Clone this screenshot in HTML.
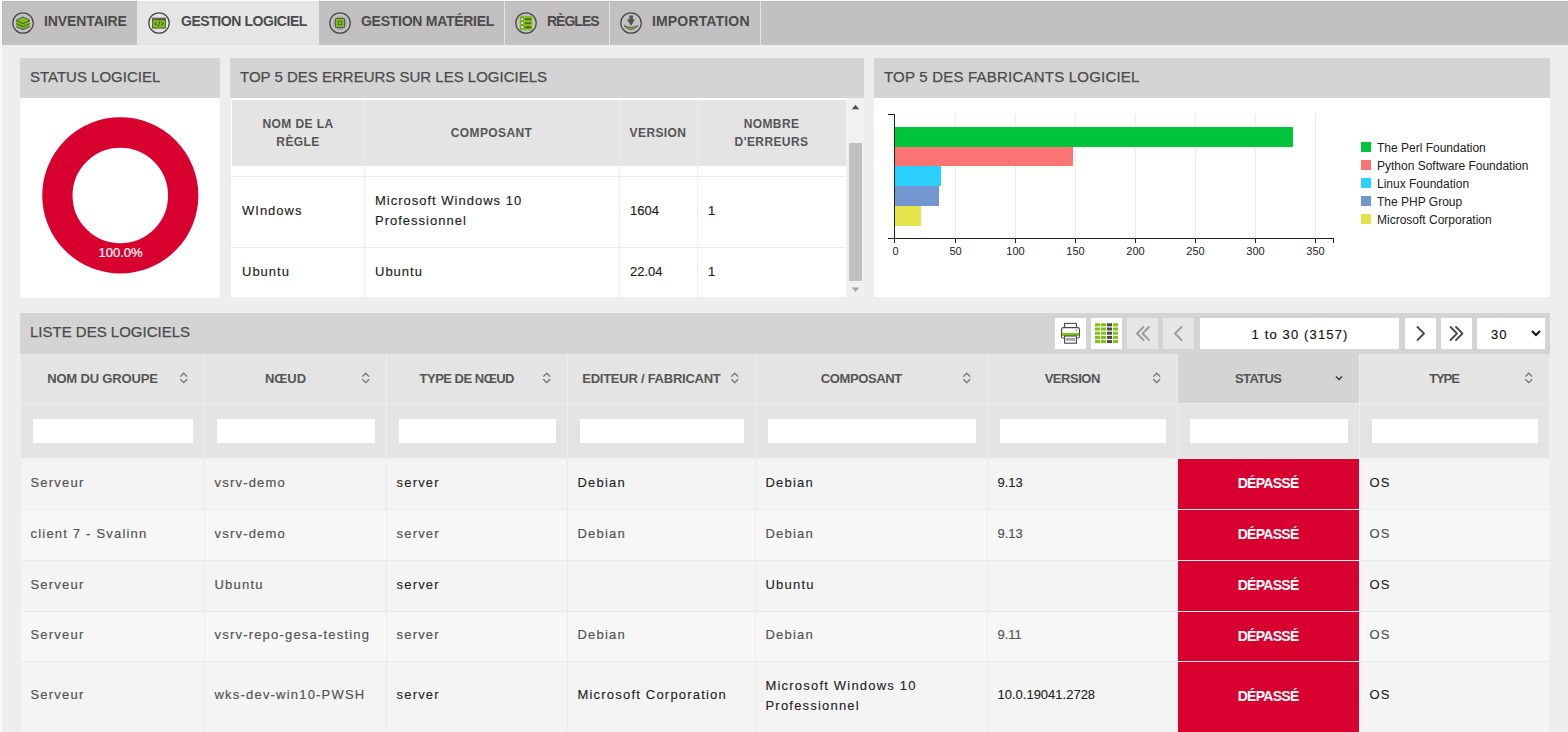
<!DOCTYPE html><html><head><meta charset="utf-8"><style>
*{margin:0;padding:0;box-sizing:border-box}
html,body{width:1568px;height:732px;overflow:hidden}
body{background:#eeeeee;font-family:"Liberation Sans",sans-serif;position:relative;color:#4a4a4a}
.a{position:absolute}
.t{position:absolute;white-space:nowrap}
#tabbar{left:2px;top:1px;width:1566px;height:44px;background:#c2c0c0}
.tab{top:1px;height:44px}
.tab.on{background:#e5e5e5}
.sep{top:1px;width:1px;height:44px;background:#e4e3e3}
.tl{font-weight:bold;font-size:14px;color:#4b4b4b;top:14px;line-height:14px}
.ph{background:#d4d4d4}
.ptitle{font-size:15px;color:#4b4b4b;line-height:15px;-webkit-text-stroke:0.25px #4b4b4b}
.white{background:#fff}
.th2{font-weight:bold;font-size:12px;color:#555;line-height:18px;text-align:center;letter-spacing:0.4px}
.td2{font-size:13px;color:#1e1e1e;line-height:20px;letter-spacing:1px;-webkit-text-stroke:0.15px #1e1e1e}
.num{letter-spacing:0!important}
.hdr{background:#e4e4e4}
.vl{width:1px;background:#ebebeb}
.hl{height:1px;background:#ebebeb}
.th{font-weight:bold;font-size:13px;color:#555;line-height:14px;top:372px;text-align:center}
.inp{background:#fff;top:419px;height:24px}
.td{font-size:13px;color:#555;line-height:20px;letter-spacing:1.2px;-webkit-text-stroke:0.2px #555}
.dk{color:#222;-webkit-text-stroke:0.1px #222}
.red{background:#d7002e}
.dep{font-weight:bold;font-size:14px;color:#fff;line-height:14px;text-align:center;letter-spacing:-0.7px;text-indent:-0.7px}
.lg{font-size:12px;color:#222;line-height:14px}
.tick{font-size:11px;color:#222;line-height:12px;text-align:center;width:40px}
.btn{top:318px;width:31px;height:31px;background:#fff}
.btn.dis{background:#e6e6e6}
</style></head><body>
<div class="a" style="left:0;top:0;width:2px;height:732px;background:#f9f9f9"></div>
<div class="a" style="left:1px;top:0;width:1px;height:732px;background:#fdfdfd"></div>
<div class="a" style="left:0;top:0;width:1568px;height:1px;background:#fcfcfc"></div>
<div class="a" id="tabbar"></div>
<div class="a" style="left:2px;top:1px;width:1566px;height:1px;background:#bab8b8"></div>
<div class="a" style="left:2px;top:1px;width:1px;height:44px;background:#bab8b8"></div>
<div class="a tab on" style="left:137px;width:182px"></div>
<div class="a sep" style="left:504px"></div>
<div class="a sep" style="left:609px"></div>
<div class="a sep" style="left:760px"></div>
<svg class="a" style="left:11px;top:10.8px" width="24" height="24" viewBox="0 0 24 24"><circle cx="12" cy="12" r="10.2" fill="none" stroke="#4a4a4a" stroke-width="1.25"/><path d="M12 6 L18.9 9.3 V15.5 L12 18.8 L5.2 15.5 V9.3Z" fill="#7cc20e"/><path d="M5.2 9.3 L12 6 L18.9 9.3" fill="none" stroke="#4a4a4a" stroke-width="0.9"/><path d="M5.2 9.6 L12 12.6 L18.9 9.6 M5.2 12.6 L12 15.6 L18.9 12.6 M5.2 15.6 L12 18.6 L18.9 15.6" fill="none" stroke="#4a4a4a" stroke-width="0.95"/></svg>
<div class="t tl" style="left:44px;letter-spacing:-0.1px">INVENTAIRE</div>
<svg class="a" style="left:147.1px;top:10.8px" width="24" height="24" viewBox="0 0 24 24"><circle cx="12" cy="12" r="10.2" fill="none" stroke="#4a4a4a" stroke-width="1.25"/><rect x="5.6" y="7.1" width="12.7" height="10" fill="#7cc20e" stroke="#4a4a4a" stroke-width="0.9"/><path d="M5.6 8.5 H18.3" stroke="#4a4a4a" stroke-width="1.3"/><path d="M6.7 8.4 H8.2 M9.5 8.4 H10.5" stroke="#7cc20e" stroke-width="0.6"/><path d="M9.9 11.2 L7.6 12.8 L9.9 14.4 M14.1 11.2 L16.4 12.8 L14.1 14.4 M12.8 10.4 L11.2 15.4" fill="none" stroke="#4a4a4a" stroke-width="1"/></svg>
<div class="t tl" style="left:181px;letter-spacing:-0.44px">GESTION LOGICIEL</div>
<svg class="a" style="left:328px;top:10.899999999999999px" width="24" height="24" viewBox="0 0 24 24"><circle cx="12" cy="12" r="10.2" fill="none" stroke="#4a4a4a" stroke-width="1.25"/><path d="M9.8 5.6 V7.4 M12 5.6 V7.4 M14.2 5.6 V7.4 M9.8 16.6 V18.4 M12 16.6 V18.4 M14.2 16.6 V18.4 M5.6 9.8 H7.4 M5.6 12 H7.4 M5.6 14.2 H7.4 M16.6 9.8 H18.4 M16.6 12 H18.4 M16.6 14.2 H18.4" stroke="#6a6a6a" stroke-width="0.9"/><rect x="7.6" y="7.6" width="8.8" height="8.8" fill="#7cc20e" stroke="#4a4a4a" stroke-width="0.8"/><rect x="10.2" y="10.2" width="3.6" height="3.6" fill="#7cc20e" stroke="#4a4a4a" stroke-width="0.8"/></svg>
<div class="t tl" style="left:361px;letter-spacing:-0.27px">GESTION MATÉRIEL</div>
<svg class="a" style="left:514px;top:10.600000000000001px" width="24" height="24" viewBox="0 0 24 24"><circle cx="12" cy="12" r="10.2" fill="none" stroke="#4a4a4a" stroke-width="1.25"/><rect x="5.9" y="5.1" width="12.3" height="14" fill="#7cc20e"/><rect x="7" y="7.1" width="2.4" height="2.4" fill="#fff" stroke="#4a4a4a" stroke-width="0.4"/><rect x="7" y="10.9" width="2.4" height="2.4" fill="#fff" stroke="#4a4a4a" stroke-width="0.4"/><rect x="7" y="15" width="2.4" height="2.4" fill="#fff" stroke="#4a4a4a" stroke-width="0.4"/><path d="M11.1 8.3 H17.1 M11.1 12.1 H17.1 M11.1 16.2 H17.1" stroke="#4a4a4a" stroke-width="1.4"/></svg>
<div class="t tl" style="left:547px;letter-spacing:-1.0px">RÈGLES</div>
<svg class="a" style="left:619.1px;top:10.899999999999999px" width="24" height="24" viewBox="0 0 24 24"><circle cx="12" cy="12" r="10.2" fill="none" stroke="#4a4a4a" stroke-width="1.25"/><path d="M5 14.6 Q12 22.6 19 14.6 Q12 18.2 5 14.6Z" fill="#7cc20e" stroke="#4a4a4a" stroke-width="0.8" stroke-linejoin="round"/><path d="M10.3 4.5 H13.9 V8.6 H16 L12.1 14.8 L7.9 8.6 H10.3Z" fill="#555"/></svg>
<div class="t tl" style="left:652px;letter-spacing:0.16px">IMPORTATION</div>
<div class="a ph" style="left:20px;top:58px;width:200px;height:40px"></div>
<div class="t ptitle" style="left:30px;top:69px;letter-spacing:0px">STATUS LOGICIEL</div>
<div class="a white" style="left:20px;top:98px;width:200px;height:199px"></div>
<div class="a white" style="left:20px;top:297px;width:200px;height:1px"></div>
<div class="a ph" style="left:230px;top:58px;width:634px;height:40px"></div>
<div class="t ptitle" style="left:240px;top:69px;letter-spacing:0px">TOP 5 DES ERREURS SUR LES LOGICIELS</div>
<div class="a white" style="left:230px;top:98px;width:634px;height:199px"></div>
<div class="a ph" style="left:874px;top:58px;width:676px;height:40px"></div>
<div class="t ptitle" style="left:884px;top:69px;letter-spacing:0.21px">TOP 5 DES FABRICANTS LOGICIEL</div>
<div class="a white" style="left:874px;top:98px;width:676px;height:199px"></div>
<svg class="a" style="left:20px;top:98px" width="200" height="199"><circle cx="100.3" cy="97.4" r="62.9" fill="none" stroke="#d7002e" stroke-width="30.3"/></svg>
<div class="t" style="left:80.5px;top:245.5px;width:80px;text-align:center;font-size:13px;line-height:14px;color:#fff;-webkit-text-stroke:0.2px #fff">100.0%</div>
<div class="a hdr" style="left:232px;top:100px;width:614px;height:66px"></div>
<div class="a vl" style="left:364px;top:100px;height:197px;background:#eeeeee"></div>
<div class="a vl" style="left:619px;top:100px;height:197px;background:#eeeeee"></div>
<div class="a vl" style="left:697px;top:100px;height:197px;background:#eeeeee"></div>
<div class="a hl" style="left:231px;top:176px;width:615px"></div>
<div class="a hl" style="left:231px;top:247px;width:615px"></div>
<div class="a" style="left:230px;top:98px;width:1px;height:199px;background:#efefef"></div>
<div class="t th2" style="left:232px;top:115px;width:132px">NOM DE LA<br>RÈGLE</div>
<div class="t th2" style="left:364px;top:124px;width:255px">COMPOSANT</div>
<div class="t th2" style="left:619px;top:124px;width:78px">VERSION</div>
<div class="t th2" style="left:697px;top:115px;width:149px">NOMBRE<br>D'ERREURS</div>
<div class="t td2" style="left:242px;top:201px">WIndows</div>
<div class="t td2" style="left:375px;top:191px">Microsoft Windows 10<br>Professionnel</div>
<div class="t td2 num" style="left:630px;top:201px">1604</div>
<div class="t td2" style="left:708px;top:201px">1</div>
<div class="t td2" style="left:242px;top:262px">Ubuntu</div>
<div class="t td2" style="left:375px;top:262px">Ubuntu</div>
<div class="t td2 num" style="left:630px;top:262px">22.04</div>
<div class="t td2" style="left:708px;top:262px">1</div>
<div class="a" style="left:846px;top:98px;width:18px;height:199px;background:#f1f1f1"></div>
<div class="a" style="left:849px;top:143px;width:13px;height:138px;background:#c1c1c1"></div>
<svg class="a" style="left:846px;top:100px" width="17" height="14"><path d="M5.8 9.3 L9.5 4.8 L13.2 9.3Z" fill="#505050"/></svg>
<svg class="a" style="left:846px;top:283px" width="17" height="14"><path d="M5.8 4.6 L9.5 9 L13.2 4.6Z" fill="#a3a3a3"/></svg>
<div class="a" style="left:955.0px;top:114px;width:1px;height:124px;background:#ebebeb"></div>
<div class="a" style="left:1015.0px;top:114px;width:1px;height:124px;background:#ebebeb"></div>
<div class="a" style="left:1075.0px;top:114px;width:1px;height:124px;background:#ebebeb"></div>
<div class="a" style="left:1135.0px;top:114px;width:1px;height:124px;background:#ebebeb"></div>
<div class="a" style="left:1195.0px;top:114px;width:1px;height:124px;background:#ebebeb"></div>
<div class="a" style="left:1255.0px;top:114px;width:1px;height:124px;background:#ebebeb"></div>
<div class="a" style="left:1315.0px;top:114px;width:1px;height:124px;background:#ebebeb"></div>
<div class="a" style="left:894px;top:126.80px;width:399.0px;height:19.75px;background:#00c43a"></div>
<div class="a" style="left:894px;top:146.55px;width:178.8px;height:19.75px;background:#fb7474"></div>
<div class="a" style="left:894px;top:166.30px;width:46.8px;height:19.75px;background:#2bd0fe"></div>
<div class="a" style="left:894px;top:186.05px;width:45.0px;height:19.75px;background:#7196d0"></div>
<div class="a" style="left:894px;top:205.80px;width:27.0px;height:19.75px;background:#e3e44a"></div>
<div class="a" style="left:893.5px;top:114px;width:1.3px;height:124.5px;background:#222"></div>
<div class="a" style="left:888px;top:113.5px;width:6.5px;height:1.3px;background:#222"></div>
<div class="a" style="left:888px;top:237.5px;width:445px;height:1.3px;background:#222"></div>
<div class="a" style="left:894.0px;top:238px;width:1.2px;height:5px;background:#222"></div>
<div class="t tick" style="left:875.5px;top:245px">0</div>
<div class="a" style="left:955.0px;top:238px;width:1.2px;height:5px;background:#222"></div>
<div class="t tick" style="left:935.5px;top:245px">50</div>
<div class="a" style="left:1015.0px;top:238px;width:1.2px;height:5px;background:#222"></div>
<div class="t tick" style="left:995.5px;top:245px">100</div>
<div class="a" style="left:1075.0px;top:238px;width:1.2px;height:5px;background:#222"></div>
<div class="t tick" style="left:1055.5px;top:245px">150</div>
<div class="a" style="left:1135.0px;top:238px;width:1.2px;height:5px;background:#222"></div>
<div class="t tick" style="left:1115.5px;top:245px">200</div>
<div class="a" style="left:1195.0px;top:238px;width:1.2px;height:5px;background:#222"></div>
<div class="t tick" style="left:1175.5px;top:245px">250</div>
<div class="a" style="left:1255.0px;top:238px;width:1.2px;height:5px;background:#222"></div>
<div class="t tick" style="left:1235.5px;top:245px">300</div>
<div class="a" style="left:1315.0px;top:238px;width:1.2px;height:5px;background:#222"></div>
<div class="t tick" style="left:1295.5px;top:245px">350</div>
<div class="a" style="left:1332.5px;top:238px;width:1.2px;height:5px;background:#222"></div>
<div class="a" style="left:1361px;top:142.0px;width:10px;height:10px;background:#00c43a"></div>
<div class="t lg" style="left:1377px;top:140.5px">The Perl Foundation</div>
<div class="a" style="left:1361px;top:160.0px;width:10px;height:10px;background:#fb7474"></div>
<div class="t lg" style="left:1377px;top:158.5px">Python Software Foundation</div>
<div class="a" style="left:1361px;top:178.0px;width:10px;height:10px;background:#2bd0fe"></div>
<div class="t lg" style="left:1377px;top:176.5px">Linux Foundation</div>
<div class="a" style="left:1361px;top:196.0px;width:10px;height:10px;background:#7196d0"></div>
<div class="t lg" style="left:1377px;top:194.5px">The PHP Group</div>
<div class="a" style="left:1361px;top:214.0px;width:10px;height:10px;background:#e3e44a"></div>
<div class="t lg" style="left:1377px;top:212.5px">Microsoft Corporation</div>
<div class="a ph" style="left:20px;top:313px;width:1530px;height:41px"></div>
<div class="t ptitle" style="left:30px;top:324px">LISTE DES LOGICIELS</div>
<div class="a btn" style="left:1055px"></div>
<div class="a btn" style="left:1091px"></div>
<div class="a btn dis" style="left:1127px"></div>
<div class="a btn dis" style="left:1163px"></div>
<div class="a btn" style="left:1200px;width:199px"></div>
<div class="a btn" style="left:1405px"></div>
<div class="a btn" style="left:1441px"></div>
<div class="a btn" style="left:1477px;width:68px"></div>
<svg class="a" style="left:1055px;top:318px" width="31" height="31" viewBox="0 0 31 31"><rect x="9.6" y="5.4" width="11.8" height="4.2" fill="#fff" stroke="#4a4a4a" stroke-width="1.1"/><path d="M8.3 9.6 H22.7 Q24.5 9.6 24.5 11.4 V18.4 Q24.5 20 23 20 H8 Q6.5 20 6.5 18.4 V11.4 Q6.5 9.6 8.3 9.6Z" fill="#fff" stroke="#4a4a4a" stroke-width="1.1"/><rect x="7" y="14.9" width="17" height="3" fill="#7cc20e"/><rect x="9.6" y="18" width="11.8" height="7.2" fill="#fff" stroke="#4a4a4a" stroke-width="1.1"/><rect x="10.7" y="19.8" width="9.6" height="3" fill="#a8a8a8"/><circle cx="21.3" cy="12.2" r="0.75" fill="#777"/></svg>
<svg class="a" style="left:1091px;top:318px" width="31" height="31" viewBox="0 0 31 31"><rect x="4" y="5.3" width="5" height="3" fill="#7cc20e"/><rect x="10" y="5.3" width="5" height="3" fill="#7cc20e"/><rect x="16" y="5.3" width="5" height="3" fill="#4a4a4a"/><rect x="22" y="5.3" width="5" height="3" fill="#7cc20e"/><rect x="4" y="9.5" width="5" height="3" fill="#7cc20e"/><rect x="10" y="9.5" width="5" height="3" fill="#7cc20e"/><rect x="16" y="9.5" width="5" height="3" fill="#4a4a4a"/><rect x="22" y="9.5" width="5" height="3" fill="#7cc20e"/><rect x="4" y="13.7" width="5" height="3" fill="#7cc20e"/><rect x="10" y="13.7" width="5" height="3" fill="#7cc20e"/><rect x="16" y="13.7" width="5" height="3" fill="#4a4a4a"/><rect x="22" y="13.7" width="5" height="3" fill="#7cc20e"/><rect x="4" y="17.9" width="5" height="3" fill="#7cc20e"/><rect x="10" y="17.9" width="5" height="3" fill="#7cc20e"/><rect x="16" y="17.9" width="5" height="3" fill="#4a4a4a"/><rect x="22" y="17.9" width="5" height="3" fill="#7cc20e"/><rect x="4" y="22.1" width="5" height="3" fill="#7cc20e"/><rect x="10" y="22.1" width="5" height="3" fill="#7cc20e"/><rect x="16" y="22.1" width="5" height="3" fill="#4a4a4a"/><rect x="22" y="22.1" width="5" height="3" fill="#7cc20e"/></svg>
<svg class="a" style="left:1127px;top:318px" width="31" height="31" viewBox="0 0 31 31"><path d="M16.5 9 L10 15.5 L16.5 22 M22 9 L15.5 15.5 L22 22" fill="none" stroke="#9a9a9a" stroke-width="1.8" stroke-linecap="round" stroke-linejoin="round"/></svg>
<svg class="a" style="left:1163px;top:318px" width="31" height="31" viewBox="0 0 31 31"><path d="M18.5 9 L12 15.5 L18.5 22" fill="none" stroke="#9a9a9a" stroke-width="1.8" stroke-linecap="round" stroke-linejoin="round"/></svg>
<svg class="a" style="left:1405px;top:318px" width="31" height="31" viewBox="0 0 31 31"><path d="M12.5 9 L19 15.5 L12.5 22" fill="none" stroke="#4a4a4a" stroke-width="1.8" stroke-linecap="round" stroke-linejoin="round"/></svg>
<svg class="a" style="left:1441px;top:318px" width="31" height="31" viewBox="0 0 31 31"><path d="M9.5 9 L16 15.5 L9.5 22 M15 9 L21.5 15.5 L15 22" fill="none" stroke="#4a4a4a" stroke-width="1.8" stroke-linecap="round" stroke-linejoin="round"/></svg>
<div class="t" style="left:1200px;top:327px;width:199px;text-align:center;font-size:13px;line-height:16px;color:#111;letter-spacing:1.15px;text-indent:1.15px;-webkit-text-stroke:0.15px #111">1 to 30 (3157)</div>
<div class="t" style="left:1491px;top:327px;font-size:13px;line-height:16px;color:#111;letter-spacing:1px;-webkit-text-stroke:0.15px #111">30</div>
<svg class="a" style="left:1529px;top:326px" width="14" height="14"><path d="M3 5 L7 9 L11 5" fill="none" stroke="#111" stroke-width="2"/></svg>
<div class="a hdr" style="left:21px;top:354px;width:1528px;height:104px"></div>
<div class="a" style="left:1178px;top:354px;width:181px;height:49px;background:#d4d4d4"></div>
<div class="a hl" style="left:21px;top:403px;width:1528px;background:#ececec"></div>
<div class="t th" style="left:20.5px;width:164.0px;letter-spacing:-0.17px;text-indent:-0.17px">NOM DU GROUPE</div>
<svg class="a" style="left:178.5px;top:372px" width="10" height="14"><path d="M1.3 4.6 L4.7 1.2 L8.1 4.6 M1.3 7.3 L4.7 10.7 L8.1 7.3" fill="none" stroke="#707070" stroke-width="1.3"/></svg>
<div class="a inp" style="left:32.5px;width:160px"></div>
<div class="t th" style="left:204.5px;width:162.0px;letter-spacing:0px;text-indent:0px">NŒUD</div>
<svg class="a" style="left:360.5px;top:372px" width="10" height="14"><path d="M1.3 4.6 L4.7 1.2 L8.1 4.6 M1.3 7.3 L4.7 10.7 L8.1 7.3" fill="none" stroke="#707070" stroke-width="1.3"/></svg>
<div class="a inp" style="left:216.5px;width:158px"></div>
<div class="t th" style="left:386.5px;width:161.0px;letter-spacing:-0.5px;text-indent:-0.5px">TYPE DE NŒUD</div>
<svg class="a" style="left:541.5px;top:372px" width="10" height="14"><path d="M1.3 4.6 L4.7 1.2 L8.1 4.6 M1.3 7.3 L4.7 10.7 L8.1 7.3" fill="none" stroke="#707070" stroke-width="1.3"/></svg>
<div class="a inp" style="left:398.5px;width:157px"></div>
<div class="t th" style="left:567.5px;width:168.0px;letter-spacing:-0.25px;text-indent:-0.25px">EDITEUR / FABRICANT</div>
<svg class="a" style="left:729.5px;top:372px" width="10" height="14"><path d="M1.3 4.6 L4.7 1.2 L8.1 4.6 M1.3 7.3 L4.7 10.7 L8.1 7.3" fill="none" stroke="#707070" stroke-width="1.3"/></svg>
<div class="a inp" style="left:579.5px;width:164px"></div>
<div class="t th" style="left:755.5px;width:212.0px;letter-spacing:-0.4px;text-indent:-0.4px">COMPOSANT</div>
<svg class="a" style="left:961.5px;top:372px" width="10" height="14"><path d="M1.3 4.6 L4.7 1.2 L8.1 4.6 M1.3 7.3 L4.7 10.7 L8.1 7.3" fill="none" stroke="#707070" stroke-width="1.3"/></svg>
<div class="a inp" style="left:767.5px;width:208px"></div>
<div class="t th" style="left:987.5px;width:170.0px;letter-spacing:-0.47px;text-indent:-0.47px">VERSION</div>
<svg class="a" style="left:1151.5px;top:372px" width="10" height="14"><path d="M1.3 4.6 L4.7 1.2 L8.1 4.6 M1.3 7.3 L4.7 10.7 L8.1 7.3" fill="none" stroke="#707070" stroke-width="1.3"/></svg>
<div class="a inp" style="left:999.5px;width:166px"></div>
<div class="t th" style="left:1177.5px;width:162.0px;letter-spacing:-0.6px;text-indent:-0.6px">STATUS</div>
<svg class="a" style="left:1333.5px;top:372px" width="10" height="12"><path d="M2 4.5 L5 7.5 L8 4.5" fill="none" stroke="#333" stroke-width="1.4"/></svg>
<div class="a inp" style="left:1189.5px;width:158px"></div>
<div class="t th" style="left:1359.5px;width:170.0px;letter-spacing:-1.1px;text-indent:-1.1px">TYPE</div>
<svg class="a" style="left:1523.5px;top:372px" width="10" height="14"><path d="M1.3 4.6 L4.7 1.2 L8.1 4.6 M1.3 7.3 L4.7 10.7 L8.1 7.3" fill="none" stroke="#707070" stroke-width="1.3"/></svg>
<div class="a inp" style="left:1371.5px;width:166px"></div>
<div class="a vl" style="left:204px;top:354px;height:104px;background:#ededed"></div>
<div class="a vl" style="left:386px;top:354px;height:104px;background:#ededed"></div>
<div class="a vl" style="left:567px;top:354px;height:104px;background:#ededed"></div>
<div class="a vl" style="left:755px;top:354px;height:104px;background:#ededed"></div>
<div class="a vl" style="left:987px;top:354px;height:104px;background:#ededed"></div>
<div class="a vl" style="left:1177px;top:354px;height:104px;background:#ededed"></div>
<div class="a vl" style="left:1359px;top:354px;height:104px;background:#ededed"></div>
<div class="a" style="left:21px;top:459px;width:1528px;height:50px;background:#f4f4f4"></div>
<div class="a hl" style="left:21px;top:458px;width:1528px;background:#efefef"></div>
<div class="a red" style="left:1178px;top:459px;width:181px;height:50px"></div>
<div class="t dep" style="left:1178px;top:475.5px;width:181px">DÉPASSÉ</div>
<div class="t td" style="left:30.5px;top:472.5px">Serveur</div>
<div class="t td" style="left:214.5px;top:472.5px">vsrv-demo</div>
<div class="t td dk" style="left:396.5px;top:472.5px">server</div>
<div class="t td dk" style="left:577.5px;top:472.5px">Debian</div>
<div class="t td dk" style="left:765.5px;top:472.5px">Debian</div>
<div class="t td dk num" style="left:997.5px;top:472.5px">9.13</div>
<div class="t td dk" style="left:1369.5px;top:472.5px">OS</div>
<div class="a" style="left:21px;top:510px;width:1528px;height:50px;background:#f7f7f7"></div>
<div class="a hl" style="left:21px;top:509px;width:1528px;background:#eaeaea"></div>
<div class="a red" style="left:1178px;top:510px;width:181px;height:50px"></div>
<div class="t dep" style="left:1178px;top:526.5px;width:181px">DÉPASSÉ</div>
<div class="t td" style="left:30.5px;top:523.5px">client 7 - Svalinn</div>
<div class="t td" style="left:214.5px;top:523.5px">vsrv-demo</div>
<div class="t td" style="left:396.5px;top:523.5px">server</div>
<div class="t td" style="left:577.5px;top:523.5px">Debian</div>
<div class="t td" style="left:765.5px;top:523.5px">Debian</div>
<div class="t td num" style="left:997.5px;top:523.5px">9.13</div>
<div class="t td" style="left:1369.5px;top:523.5px">OS</div>
<div class="a" style="left:21px;top:561px;width:1528px;height:50px;background:#f4f4f4"></div>
<div class="a hl" style="left:21px;top:560px;width:1528px;background:#eaeaea"></div>
<div class="a red" style="left:1178px;top:561px;width:181px;height:50px"></div>
<div class="t dep" style="left:1178px;top:577.5px;width:181px">DÉPASSÉ</div>
<div class="t td" style="left:30.5px;top:574.5px">Serveur</div>
<div class="t td" style="left:214.5px;top:574.5px">Ubuntu</div>
<div class="t td dk" style="left:396.5px;top:574.5px">server</div>
<div class="t td dk" style="left:765.5px;top:574.5px">Ubuntu</div>
<div class="t td dk" style="left:1369.5px;top:574.5px">OS</div>
<div class="a" style="left:21px;top:612px;width:1528px;height:49px;background:#f7f7f7"></div>
<div class="a hl" style="left:21px;top:611px;width:1528px;background:#eaeaea"></div>
<div class="a red" style="left:1178px;top:612px;width:181px;height:49px"></div>
<div class="t dep" style="left:1178px;top:629.0px;width:181px">DÉPASSÉ</div>
<div class="t td" style="left:30.5px;top:625.0px">Serveur</div>
<div class="t td" style="left:214.5px;top:625.0px">vsrv-repo-gesa-testing</div>
<div class="t td" style="left:396.5px;top:625.0px">server</div>
<div class="t td" style="left:577.5px;top:625.0px">Debian</div>
<div class="t td" style="left:765.5px;top:625.0px">Debian</div>
<div class="t td num" style="left:997.5px;top:625.0px">9.11</div>
<div class="t td" style="left:1369.5px;top:625.0px">OS</div>
<div class="a" style="left:21px;top:662px;width:1528px;height:70px;background:#f4f4f4"></div>
<div class="a hl" style="left:21px;top:661px;width:1528px;background:#eaeaea"></div>
<div class="a red" style="left:1178px;top:662px;width:181px;height:98px"></div>
<div class="t dep" style="left:1178px;top:689.0px;width:181px">DÉPASSÉ</div>
<div class="t td" style="left:30.5px;top:684.5px">Serveur</div>
<div class="t td" style="left:214.5px;top:684.5px">wks-dev-win10-PWSH</div>
<div class="t td dk" style="left:396.5px;top:684.5px">server</div>
<div class="t td dk" style="left:577.5px;top:684.5px">Microsoft Corporation</div>
<div class="t td dk" style="left:765.5px;top:675.5px">Microsoft Windows 10<br>Professionnel</div>
<div class="t td dk num" style="left:997.5px;top:684.5px">10.0.19041.2728</div>
<div class="t td dk" style="left:1369.5px;top:684.5px">OS</div>
<div class="a vl" style="left:204px;top:458px;height:274px;background:#eaeaea"></div>
<div class="a vl" style="left:386px;top:458px;height:274px;background:#eaeaea"></div>
<div class="a vl" style="left:567px;top:458px;height:274px;background:#eaeaea"></div>
<div class="a vl" style="left:755px;top:458px;height:274px;background:#eaeaea"></div>
<div class="a vl" style="left:987px;top:458px;height:274px;background:#eaeaea"></div>
<div class="a vl" style="left:1177px;top:458px;height:274px;background:#eaeaea"></div>
<div class="a vl" style="left:1359px;top:458px;height:274px;background:#eaeaea"></div>
<div class="a vl" style="left:1359px;top:458px;height:274px;background:#f1f6f6"></div>
<div class="a hl" style="left:1178px;top:458px;width:181px;background:#eef3f3"></div>
<div class="a hl" style="left:1178px;top:509px;width:181px;background:#eef3f3"></div>
<div class="a hl" style="left:1178px;top:560px;width:181px;background:#eef3f3"></div>
<div class="a hl" style="left:1178px;top:611px;width:181px;background:#eef3f3"></div>
<div class="a hl" style="left:1178px;top:661px;width:181px;background:#eef3f3"></div>
</body></html>
